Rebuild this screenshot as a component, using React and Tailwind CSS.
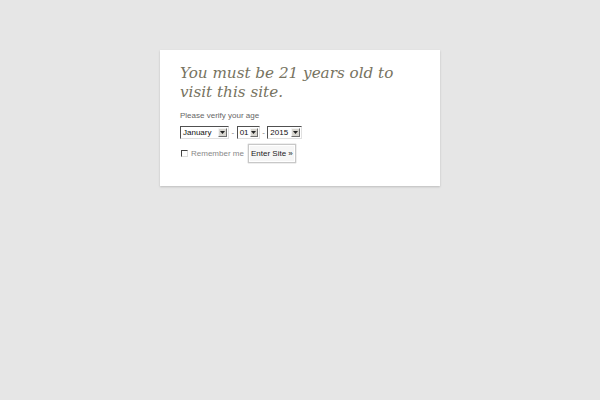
import React from "react";

function FakeSelect({ value, width }) {
  return (
    <div className={`flex h-[13px] items-stretch border border-t-[#505050] border-l-[#505050] border-r-[#e0e0e0] border-b-[#e0e0e0] bg-white ${width}`}>
      <span className="flex-1 pl-[2px] text-[8px] leading-[11px] text-[#111]">{value}</span>
      <span className="m-[1px] flex w-[9px] items-center justify-center border border-t-[#f4f4f4] border-l-[#f4f4f4] border-r-[#707070] border-b-[#707070] bg-[#d8d6d0]">
        <svg width="5" height="3" viewBox="0 0 5 3"><path d="M0 0h5L2.5 3z" fill="#222" /></svg>
      </span>
    </div>
  );
}

export default function App() {
  return (
    <div className="min-h-[400px] w-full bg-[#e6e6e6] pt-[50px]" style={{ fontFamily: "'Liberation Sans', Arial, sans-serif" }}>
      <div className="mx-auto w-[280px] bg-white px-[20px] pb-[23px] pt-[14px] shadow-[0_1px_2px_rgba(0,0,0,0.18)]">
        <h1 className="text-[15.2px] italic leading-[19px] text-[#77735f]" style={{ fontFamily: "'DejaVu Serif', serif" }}>
          You must be 21 years old to visit this site.
        </h1>
        <p className="mt-[9px] text-[8px] leading-[10px] text-[#666]">Please verify your age</p>
        <div className="mt-[5px] flex items-center gap-[2.5px] text-[8px] text-[#777]">
          <FakeSelect value="January" width="w-[49px]" />
          <span>-</span>
          <FakeSelect value="01" width="w-[23px]" />
          <span>-</span>
          <FakeSelect value="2015" width="w-[35px]" />
        </div>
        <div className="mt-[5px] flex items-center">
          <span className="ml-[1px] h-[7px] w-[7px] border border-t-[#444] border-l-[#444] border-r-[#ddd] border-b-[#ddd] bg-white" />
          <span className="ml-[3px] text-[8px] text-[#888]">Remember me</span>
          <button className="ml-[4px] h-[19px] w-[48px] border border-[#c8c8c8] bg-[#f6f6f6] text-[8px] text-[#222] shadow-[inset_0_0_0_1px_#fff,0_0_1px_#999]">
            Enter Site »
          </button>
        </div>
      </div>
    </div>
  );
}
